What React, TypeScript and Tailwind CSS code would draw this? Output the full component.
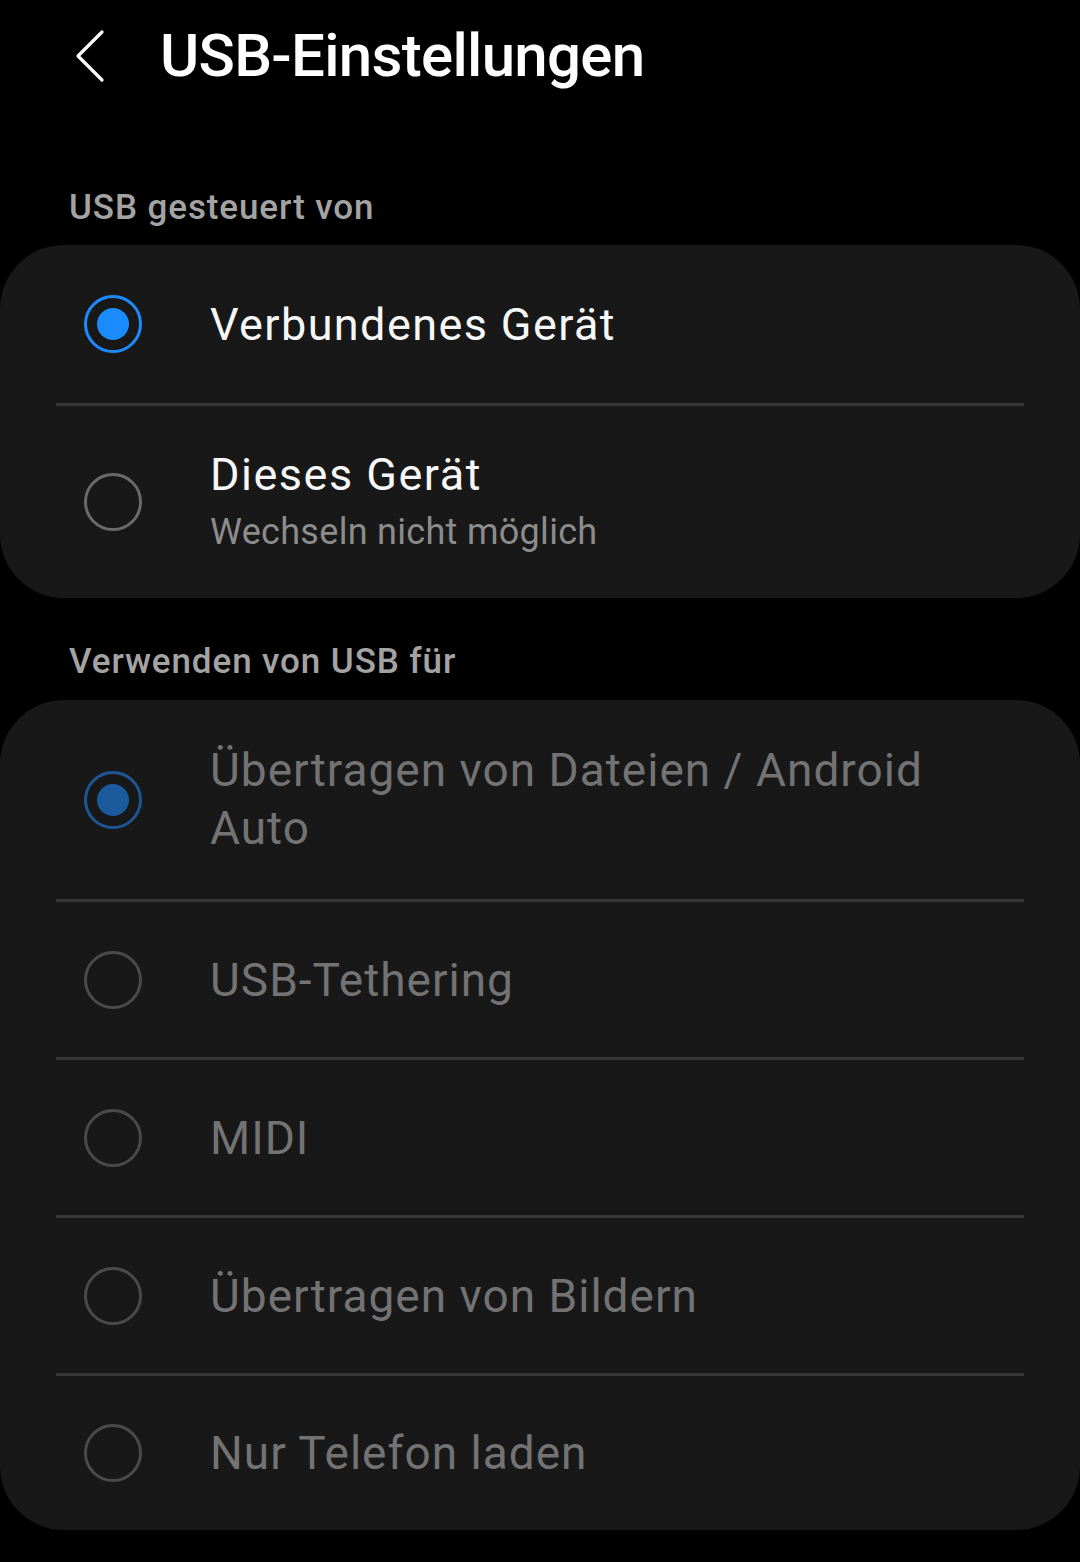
import React from "react";

function Radio({ state }: { state: "on" | "off" | "on-disabled" | "off-disabled" }) {
  if (state === "on" || state === "on-disabled") {
    const c = state === "on" ? "border-[#1a8cff]" : "border-[#1c5694]";
    const d = state === "on" ? "bg-[#1a8cff]" : "bg-[#1b5a9c]";
    return (
      <div className={`w-[58px] h-[58px] rounded-full border-[3px] ${c} flex items-center justify-center shrink-0`}>
        <div className={`w-[32px] h-[32px] rounded-full ${d}`} />
      </div>
    );
  }
  const c = state === "off" ? "border-[#6a6a6a]" : "border-[#4a4a4a]";
  return <div className={`w-[58px] h-[58px] rounded-full border-[3px] ${c} shrink-0`} />;
}

function Divider() {
  return <div className="mx-[56px] h-[3px] bg-[#363636]" />;
}

export default function App() {
  const font = { fontFamily: "Roboto, 'Noto Sans', sans-serif" };
  return (
    <div className="w-[1080px] h-[1562px] bg-black overflow-hidden" style={font}>
      <div className="h-[112px] flex items-center pl-[74px]">
        <svg width="32" height="54" viewBox="0 0 32 54" className="shrink-0">
          <path d="M28 3 L4 27 L28 51" stroke="white" strokeWidth="3.2" fill="none" strokeLinecap="round" strokeLinejoin="round" />
        </svg>
        <div className="ml-[54px] text-white text-[60px] font-medium tracking-[-0.7px] leading-none">USB-Einstellungen</div>
      </div>

      <div className="h-[133px] flex items-end pb-[20px] pl-[69px]">
        <div className="text-[#a3a3a3] text-[35px] font-medium leading-none tracking-[0.9px]">USB gesteuert von</div>
      </div>

      <div className="bg-[#181818] rounded-[64px]">
        <div className="h-[158px] flex items-center pl-[84px]">
          <Radio state="on" />
          <div className="ml-[68px] text-[#f7f7f7] text-[45px] leading-none tracking-[1.4px]">Verbundenes Gerät</div>
        </div>
        <Divider />
        <div className="h-[192px] flex items-center pl-[84px]">
          <Radio state="off" />
          <div className="ml-[68px] flex flex-col">
            <div className="text-[#f7f7f7] text-[45px] leading-[56px] tracking-[1.5px]">Dieses Gerät</div>
            <div className="text-[#8c8c8c] text-[36px] leading-[52px] tracking-[0.3px] pt-[3px]">Wechseln nicht möglich</div>
          </div>
        </div>
      </div>

      <div className="h-[102px] flex items-end pb-[21px] pl-[69px]">
        <div className="text-[#a3a3a3] text-[35px] font-medium leading-none tracking-[0.9px]">Verwenden von USB für</div>
      </div>

      <div className="bg-[#181818] rounded-[64px]">
        <div className="h-[199px] flex items-center pl-[84px]">
          <Radio state="on-disabled" />
          <div className="ml-[68px] max-w-[740px] text-[#737373] text-[46px] leading-[58px] tracking-[1px] pb-[2px]">
            Übertragen von Dateien / Android Auto
          </div>
        </div>
        <Divider />
        {["USB-Tethering", "MIDI", "Übertragen von Bildern", "Nur Telefon laden"].map((t, i, a) => (
          <React.Fragment key={t}>
            <div className={`${i === a.length - 1 ? "h-[154px]" : "h-[155px]"} flex items-center pl-[84px]`}>
              <Radio state="off-disabled" />
              <div className="ml-[68px] text-[#737373] text-[46px] leading-none tracking-[1px]">{t}</div>
            </div>
            {i < a.length - 1 && <Divider />}
          </React.Fragment>
        ))}
      </div>
    </div>
  );
}
